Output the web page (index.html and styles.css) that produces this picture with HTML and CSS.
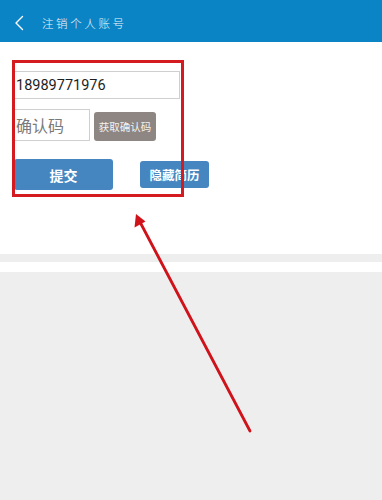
FILE: index.html
```html
<!DOCTYPE html>
<html lang="zh">
<head>
<meta charset="utf-8">
<link rel="stylesheet" href="styles.css">
</head>
<body>
<div class="page">
  <header class="header">
    <svg class="back" width="12" height="16" viewBox="0 0 12 16"><path d="M9.5 1.5 L3 8 L9.5 14.5" fill="none" stroke="#fff" stroke-width="1.4" stroke-linecap="round" stroke-linejoin="round"/></svg>
    <span class="title">注销个人账号</span>
  </header>
  <section class="form">
    <div class="row">
      <div class="input phone">18989771976</div>
    </div>
    <div class="row row-code">
      <div class="input code"><span class="placeholder">确认码</span></div>
      <button class="btn btn-gray">获取确认码</button>
    </div>
    <div class="row row-actions">
      <button class="btn btn-submit">提交</button>
      <button class="btn btn-hide">隐藏简历</button>
    </div>
  </section>
  <div class="band"></div>
  <div class="gap"></div>
  <div class="rest"></div>

  <div class="mark-box"></div>
  <svg class="mark-arrow" width="382" height="500" viewBox="0 0 382 500">
    <line x1="250" y1="431" x2="140" y2="222" stroke="#d0121a" stroke-width="2.8" stroke-linecap="round"/>
    <polygon points="136,214 134.5,227.5 145.5,221.5" fill="#d0121a"/>
  </svg>
</div>
</body>
</html>
```

FILE: styles.css
```css
html, body {
  margin: 0;
  padding: 0;
  background: #efeeef;
}
body {
  font-family: Roboto, "Noto Sans CJK SC", sans-serif;
}
.page {
  position: relative;
  width: 382px;
  height: 500px;
  overflow: hidden;
  background: #efeeef;
}
.header {
  height: 42px;
  background: #0b84c6;
  display: flex;
  align-items: center;
  padding-top: 3px;
  box-sizing: border-box;
}
.back {
  margin-left: 13px;
  flex: none;
}
.title {
  margin-left: 17px;
  color: #eef6fb;
  font-family: "Noto Sans CJK SC", sans-serif;
  font-size: 11.5px;
  font-weight: 300;
  letter-spacing: 2.6px;
}
.form {
  background: #fff;
  height: 212px;
  box-sizing: border-box;
  padding: 29px 0 0 14px;
}
.row {
  display: flex;
}
.input {
  box-sizing: border-box;
  border: 1px solid #cfcfcf;
  background: #fff;
  display: flex;
  align-items: center;
}
.phone {
  width: 166px;
  height: 28px;
  padding-left: 1px;
  font-family: Roboto, sans-serif;
  font-size: 14.5px;
  color: #1e1e1e;
}
.row-code {
  margin-top: 10px;
  align-items: flex-end;
}
.code {
  width: 76px;
  height: 32px;
  padding-left: 1px;
}
.placeholder {
  font-family: "Noto Sans CJK SC", sans-serif;
  font-size: 16px;
  color: #7a7a7a;
}
.btn {
  border: none;
  padding: 0;
  margin: 0;
  color: #fff;
  font-family: "Noto Sans CJK SC", sans-serif;
  display: flex;
  align-items: center;
  justify-content: center;
}
.btn-gray {
  margin-left: 4px;
  width: 62px;
  height: 29px;
  border-radius: 3px;
  background: #8e8683;
  font-size: 10.5px;
  color: #f4f2f1;
}
.row-actions {
  margin-top: 18px;
  align-items: center;
}
.btn-submit {
  width: 99px;
  height: 31px;
  border-radius: 3px;
  background: #4586c1;
  font-size: 14px;
  font-weight: 700;
}
.btn-hide {
  margin-left: 27px;
  width: 69px;
  height: 27px;
  border-radius: 3px;
  background: #4586c1;
  font-size: 12.5px;
  font-weight: 700;
}
.band {
  height: 8px;
  background: #efeeef;
}
.gap {
  height: 10px;
  background: #fff;
}
.rest {
  height: 228px;
  background: #efeeef;
}
.mark-box {
  position: absolute;
  left: 12px;
  top: 60px;
  width: 166px;
  height: 131px;
  border: 3px solid #d31b20;
}
.mark-arrow {
  position: absolute;
  left: 0;
  top: 0;
}
```
